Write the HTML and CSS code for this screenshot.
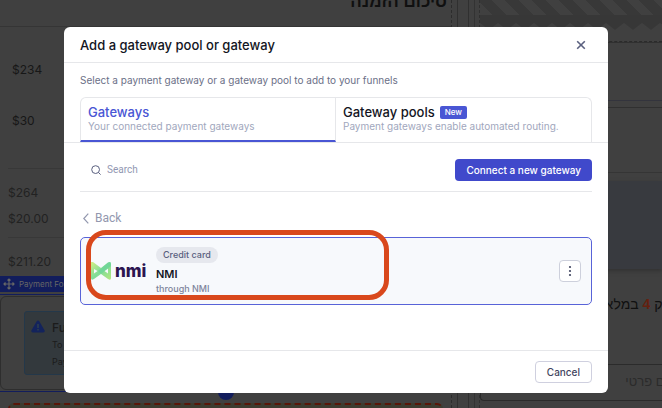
FILE: index.html
```html
<!DOCTYPE html>
<html lang="en">
<head>
<meta charset="utf-8">
<title>Add a gateway pool or gateway</title>
<link rel="stylesheet" href="styles.css">
</head>
<body>
<div class="page">
  <div class="editor">
    <section class="summary">
      <h1 class="summary-title" dir="rtl" lang="he">סיכום הזמנה</h1>
      <div class="items">
        <span>$234</span>
        <span>$30</span>
      </div>
      <div class="totals">
        <span>$264</span>
        <span>$20.00</span>
      </div>
      <div class="total">$211.20</div>
      <div class="block-tag">
        <svg width="12" height="12" viewBox="0 0 12 12" fill="none" stroke="currentColor" stroke-width="1.2"><path d="M6 1v10M1 6h10M4.500 2.500 6 1l1.500 1.500M4.500 9.500 6 11l1.500-1.500M2.500 4.500 1 6l1.500 1.500M9.500 4.500 11 6 9.500 7.500"/></svg>
        <span>Payment Form</span>
      </div>
      <div class="block">
        <div class="block-box">
          <div class="alert">
            <svg width="14" height="13" viewBox="0 0 14 13"><path fill="#13235c" d="M7 .500c.600 0 1 .300 1.300.800l5.200 9c.600 1-.100 2.200-1.200 2.200H1.700c-1.100 0-1.800-1.200-1.200-2.200l5.200-9C6 .800 6.400.500 7 .500z"/><path stroke="#33444c" stroke-width="1.300" d="M7 4v4M7 9v1.500"/></svg>
            <div class="alert-text">
              <strong>Funnel</strong>
              <span>To test</span>
              <span>Payment</span>
            </div>
          </div>
        </div>
        <span class="add-dot"></span>
      </div>
      <div class="drop-zone"></div>
    </section>
    <div class="gutter"><i></i></div>
    <section class="side">
      <div class="stripes"></div>
      <svg class="fringe" width="100%" height="15"><defs><pattern id="teeth" width="18" height="15" patternUnits="userSpaceOnUse"><path fill="#373737" d="M0 0h18v8l-9 7-9-7z"/></pattern></defs><rect width="100%" height="15" fill="url(#teeth)"/></svg>
      <div class="row row-a"></div>
      <div class="row row-b"></div>
      <div class="row row-c"></div>
      <div class="row row-d"></div>
      <div class="panel"></div>
      <p class="stock" dir="rtl" lang="he">רק <b>4</b> במלאי</p>
      <div class="name-field" dir="rtl" lang="he">שם פרטי</div>
    </section>
  </div>

  <div class="overlay">
    <div class="modal" role="dialog" aria-labelledby="modal-title">
      <header class="modal-head">
        <h2 id="modal-title">Add a gateway pool or gateway</h2>
        <button class="close" type="button" aria-label="Close"><svg width="10" height="10" viewBox="0 0 10 10" stroke="#5a607f" stroke-width="1.600"><path d="M1.200 1.200l7.600 7.600M8.800 1.200 1.200 8.800"/></svg></button>
      </header>
      <div class="modal-body">
        <p class="intro">Select a payment gateway or a gateway pool to add to your funnels</p>
        <div class="tabs" role="tablist">
          <button class="tab active" type="button" role="tab" aria-selected="true">
            <span class="tab-title">Gateways</span>
            <span class="tab-note">Your connected payment gateways</span>
          </button>
          <button class="tab" type="button" role="tab" aria-selected="false">
            <span class="tab-title">Gateway pools <span class="badge">New</span></span>
            <span class="tab-note">Payment gateways enable automated routing.</span>
          </button>
        </div>
        <div class="tools">
          <label class="search">
            <svg width="10" height="10" viewBox="0 0 10 10" fill="none" stroke="#5a607f" stroke-width="1"><circle cx="4.600" cy="4.600" r="3.900"/><path d="M7.400 7.400 9.600 9.600"/></svg>
            <input type="text" placeholder="Search" aria-label="Search">
          </label>
          <button class="primary" type="button">Connect a new gateway</button>
        </div>
        <button class="back" type="button"><svg width="6" height="11" viewBox="0 0 6 11" fill="none" stroke="currentColor" stroke-width="1.200"><path d="M5.300.700.800 5.500l4.500 4.800"/></svg>Back</button>
        <div class="card">
          <div class="logo">
            <svg width="20" height="18" viewBox="0 0 20 18">
              <defs><linearGradient id="leaf" x1="0" y1="0" x2="1" y2="1"><stop offset="0" stop-color="#d5ee84"/><stop offset=".5" stop-color="#7fdc98"/><stop offset="1" stop-color="#b5e87f"/></linearGradient></defs>
              <path fill="url(#leaf)" d="M0 0h2l8 6 7-5.500Q20-1 20 2v14q0 3-3 1l-7-5-7 5q-3 2-3-1z"/>
              <path fill="#f7f9fc" d="M3 7v4.500L6.500 9zM17 6.500v5L13.500 9z"/>
              <path fill="#5fd09a" opacity=".5" d="M17 .500 7 9l3 3 10-8V1q-1-1.500-3-.500z"/>
            </svg>
            <span class="logo-text">nmi</span>
          </div>
          <div class="info">
            <span class="chip">Credit card</span>
            <strong>NMI</strong>
            <small>through NMI</small>
          </div>
          <button class="more" type="button" aria-label="More options"><svg width="4" height="12" viewBox="0 0 4 12" fill="#3f4460"><circle cx="2" cy="2" r="1.100"/><circle cx="2" cy="6" r="1.100"/><circle cx="2" cy="10" r="1.100"/></svg></button>
          <span class="marker"></span>
        </div>
      </div>
      <footer class="modal-foot"><button class="cancel" type="button">Cancel</button></footer>
    </div>
  </div>
</div>
</body>
</html>
```
FILE: styles.css
```css
* { box-sizing: border-box; }
body { margin: 0; background: #404040; font-family: Inter, "Liberation Sans", sans-serif; }
button, input { font: inherit; margin: 0; padding: 0; border: 0; background: none; text-align: left; }
h1, h2, p { margin: 0; }
svg { display: block; flex: none; }
.page { position: relative; height: 100vh; overflow: hidden; }

.editor { display: grid; grid-template-columns: 452fr 28px 182fr; height: 100%; overflow: hidden; color: #171717; }
.summary { border-right: 1px dashed #2c2c2c; font-size: 12px; }
.summary-title { height: 27px; padding-right: 4px; border-bottom: 1px solid #353535; font: bold 17px/4px "Liberation Sans", sans-serif; color: #101010; }
.items { display: flex; flex-direction: column; gap: 35px; padding: 35px 12px 0; line-height: 16px; height: 141px; }
.totals { display: flex; flex-direction: column; gap: 10px; margin: 0 8px; padding-top: 16px; height: 70px; border-top: 1px solid #383838; border-bottom: 1px solid #383838; line-height: 16px; color: #222; }
.total { padding: 16px 8px 0; height: 38px; line-height: 16px; color: #222; }
.block-tag { display: flex; align-items: center; gap: 4px; height: 16px; padding-left: 3px; background: #121d5c; color: #666; font-size: 8px; }
.block { position: relative; margin-top: 2px; height: 98px; border-top: 1px solid #121d5c; border-bottom: 1px solid #121d5c; padding: 1px 0; }
.block-box { height: 94px; border: 1px solid #2e2e2e; border-radius: 6px; padding: 14px 23px; }
.alert { display: flex; gap: 7px; height: 64px; padding: 8px 6px; border: 1px solid #24384a; border-radius: 3px; background: #33393d; }
.alert-text { display: flex; flex-direction: column; font-size: 9px; line-height: 17px; color: #1b1b1b; }
.alert-text strong { font-size: 12px; font-weight: 500; line-height: 16px; }
.add-dot { position: absolute; left: 50%; bottom: -9px; width: 16px; height: 16px; margin-left: -8px; border-radius: 50%; background: #121d5c; }
.drop-zone { margin: 11px 8px 0; height: 20px; border: 2px dashed #5a1608; border-radius: 6px; background: #3d3c30; }
.gutter { padding: 0 5px; background: linear-gradient(#333, #333) 22px 0 / 1px 100% no-repeat; border-right: 1px dashed #303030; }
.gutter i { display: block; height: 100%; width: 12px; border: solid #303030; border-width: 0 1px; }
.side { overflow: hidden; }
.stripes { height: 15px; background: repeating-linear-gradient(45deg, #404040 0 9px, #383838 9px 19px); }
.row { border-bottom: 1px solid #303030; }
.row-a { height: 12px; border-bottom: 1px dashed #2b2b2b; box-shadow: 0 1px 0 #303030; }
.row-b { height: 59px; border-color: #33343d; }
.row-c { height: 7px; }
.row-d { height: 65px; border-color: #353535; }
.panel { height: 88px; margin-top: 8px; background: #383a3f; box-shadow: 0 2px 4px #323232; }
.stock { margin: 25px -8px 0 0; font: 14px/20px "Liberation Sans", sans-serif; white-space: nowrap; color: #101010; }
.stock b { color: #65200f; }
.name-field { height: 37px; margin: 50px -22px 0 0; padding: 0 10px; border: 1px solid #2b2b2b; border-right: 0; border-radius: 4px 0 0 4px; font: 13px/34px "Liberation Sans", sans-serif; color: #2b2b2b; }

.overlay { position: absolute; inset: 0; padding: 27px 54px 15px 64px; }
.modal { display: flex; flex-direction: column; height: 100%; border-radius: 6px; background: #fff; }
.modal-head { display: flex; align-items: center; justify-content: space-between; height: 36px; padding: 0 22px 0 16px; border-bottom: 1px solid #e6e7ea; }
.modal-head h2 { font-size: 13px; font-weight: 500; color: #131523; }
.modal-body { flex: 1; padding: 0 16px; }
.intro { padding-top: 9px; font-size: 10px; line-height: 16px; color: #6b7087; }
.tabs { display: grid; grid-template-columns: 1fr 1fr; height: 46px; margin: 9px -16px 0; padding: 0 16px; border-bottom: 1px solid #e6e7ea; }
.tab { display: flex; flex-direction: column; padding: 6px 7px; height: 45px; border: 1px solid #e6e7ea; border-bottom: 0; border-radius: 0 6px 0 0; }
.tab.active { border-bottom: 2px solid #4956d4; border-radius: 6px 0 0 0; }
.tab:last-child { border-left: 0; }
.tab-title { display: flex; align-items: center; gap: 5px; font-size: 13px; font-weight: 500; line-height: 16px; color: #131523; }
.active .tab-title { color: #4956d4; }
.tab-note { font-size: 10px; line-height: 12px; color: #a1a7bd; }
.badge { padding: 0 5px; border-radius: 2px; background: #4956d4; color: #fff; font-size: 8px; line-height: 13px; }
.tools { display: flex; align-items: center; justify-content: space-between; height: 49px; padding-top: 6px; border-bottom: 1px solid #e6e7ea; }
.search { display: flex; align-items: center; gap: 6px; padding-left: 11px; }
.search input { width: 160px; font: 10px/16px Roboto, sans-serif; outline: 0; }
.search input::placeholder { color: #9297b2; opacity: 1; }
.primary { height: 22px; padding: 0 11px; border-radius: 4px; background: #4049cb; color: #fff; font-size: 10px; font-weight: 500; }
.back { display: flex; align-items: center; gap: 6px; margin-top: 18px; padding-left: 3px; font: 12px/16px Roboto, sans-serif; color: #9297ae; }
.card { position: relative; display: flex; align-items: center; height: 68px; margin-top: 11px; padding: 0 10px; border: 1px solid #5863d8; border-radius: 5px; background: #f7f9fc; }
.logo { display: flex; align-items: center; gap: 4px; width: 65px; }
.logo-text { font-size: 17px; font-weight: 800; line-height: 18px; color: #2c1551; }
.info { display: flex; flex-direction: column; align-items: flex-start; flex: 1; padding-top: 2px; }
.chip { padding: 0 7px; border-radius: 8px; background: #e6e8ee; font-size: 9px; font-weight: 500; line-height: 16px; color: #5a607f; }
.info strong { margin-top: 4px; font-size: 11px; font-weight: 600; line-height: 14px; color: #131523; }
.info small { font-size: 9px; font-weight: 500; line-height: 16px; color: #7e849b; }
.more { display: grid; place-items: center; width: 22px; height: 22px; border: 1px solid #cdd0dc; border-radius: 4px; background: #fff; }
.marker { position: absolute; left: 5px; top: -8px; width: 303px; height: 70px; border: 5px solid #d9481c; border-radius: 20px; pointer-events: none; }
.modal-foot { display: flex; justify-content: flex-end; align-items: center; height: 43px; padding: 0 16px; border-top: 1px solid #e6e7ea; }
.cancel { height: 22px; padding: 0 11px; border: 1px solid #cfd0df; border-radius: 4px; background: #fff; color: #3f4460; font-size: 10px; font-weight: 500; }
```
